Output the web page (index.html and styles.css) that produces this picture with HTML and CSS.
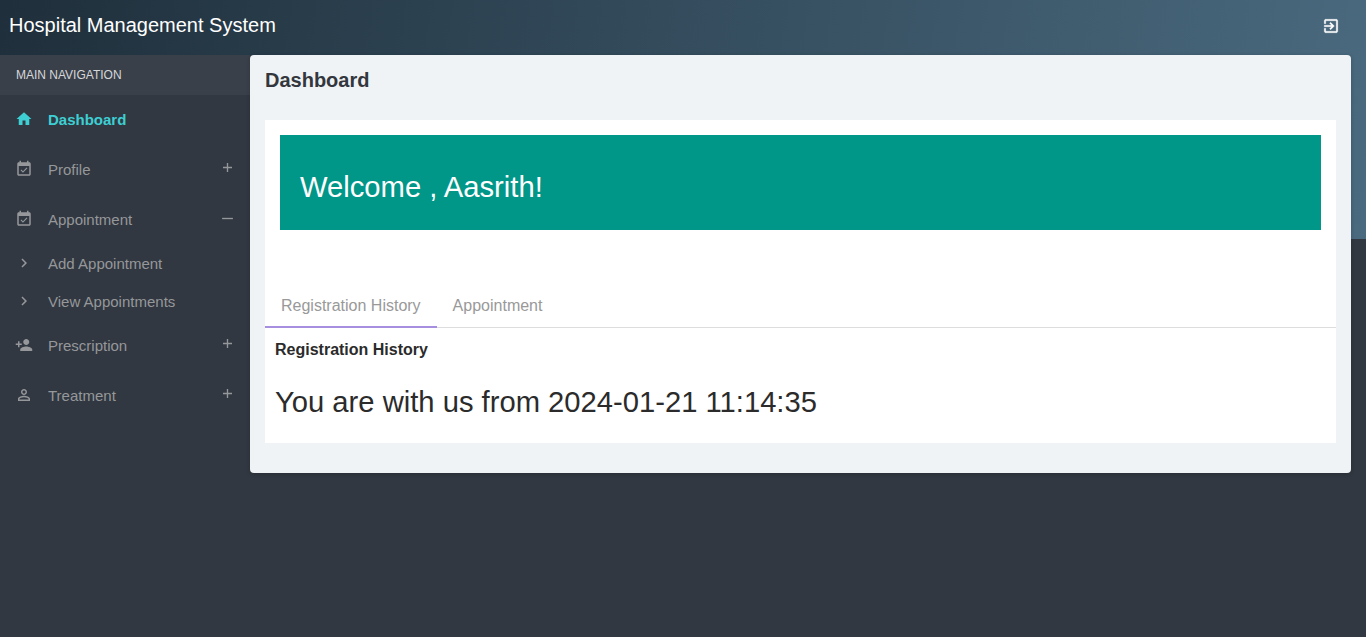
FILE: index.html
```html
<!DOCTYPE html>
<html lang="en">
<head>
    <meta charset="UTF-8">
    <meta name="viewport" content="width=device-width, initial-scale=1.0">
    <title>Hospital Management System</title>
    <link rel="stylesheet" href="styles.css">
</head>
<body>
    <header class="topbar">
        <span class="brand">Hospital Management System</span>
        <a class="logout" href="#" aria-label="Logout">
            <svg viewBox="0 0 24 24"><path d="M10.09 15.59L11.5 17l5-5-5-5-1.41 1.41L12.67 11H3v2h9.67l-2.58 2.59zM19 3H5c-1.11 0-2 .9-2 2v4h2V5h14v14H5v-4H3v4c0 1.1.89 2 2 2h14c1.1 0 2-.9 2-2V5c0-1.11-.89-2-2-2z"/></svg>
        </a>
    </header>
    <div class="layout">
        <nav class="sidebar">
            <div class="nav-title">MAIN NAVIGATION</div>
            <ul class="nav-list">
                <li class="nav-item active">
                    <svg class="nav-icon" viewBox="0 0 24 24"><path d="M10 20v-6h4v6h5v-8h3L12 3 2 12h3v8z"/></svg>
                    <span class="nav-label">Dashboard</span>
                </li>
                <li class="nav-item">
                    <svg class="nav-icon" viewBox="0 0 24 24"><path d="M16.53 11.06L15.47 10l-4.88 4.88-2.12-2.12-1.06 1.06L10.59 17l5.94-5.94zM19 3h-1V1h-2v2H8V1H6v2H5c-1.11 0-1.99.9-1.99 2L3 19c0 1.1.89 2 2 2h14c1.1 0 2-.9 2-2V5c0-1.1-.9-2-2-2zm0 16H5V8h14v11z"/></svg>
                    <span class="nav-label">Profile</span>
                    <svg class="nav-toggle" viewBox="0 0 10 10"><path d="M0 5h10M5 0v10"/></svg>
                </li>
                <li class="nav-item">
                    <svg class="nav-icon" viewBox="0 0 24 24"><path d="M16.53 11.06L15.47 10l-4.88 4.88-2.12-2.12-1.06 1.06L10.59 17l5.94-5.94zM19 3h-1V1h-2v2H8V1H6v2H5c-1.11 0-1.99.9-1.99 2L3 19c0 1.1.89 2 2 2h14c1.1 0 2-.9 2-2V5c0-1.1-.9-2-2-2zm0 16H5V8h14v11z"/></svg>
                    <span class="nav-label">Appointment</span>
                    <svg class="nav-toggle toggle-wide" viewBox="0 0 12 10"><path d="M0 5h12"/></svg>
                </li>
                <li class="nav-item sub-item">
                    <svg class="nav-icon" viewBox="0 0 24 24"><path d="M10 6L8.59 7.41 13.17 12l-4.58 4.59L10 18l6-6z"/></svg>
                    <span class="nav-label">Add Appointment</span>
                </li>
                <li class="nav-item sub-item">
                    <svg class="nav-icon" viewBox="0 0 24 24"><path d="M10 6L8.59 7.41 13.17 12l-4.58 4.59L10 18l6-6z"/></svg>
                    <span class="nav-label">View Appointments</span>
                </li>
                <li class="nav-item">
                    <svg class="nav-icon" viewBox="0 0 24 24"><path d="M15 12c2.21 0 4-1.79 4-4s-1.79-4-4-4-4 1.79-4 4 1.79 4 4 4zm-9-2V7H4v3H1v2h3v3h2v-3h3v-2H6zm9 4c-2.67 0-8 1.34-8 4v2h16v-2c0-2.66-5.33-4-8-4z"/></svg>
                    <span class="nav-label">Prescription</span>
                    <svg class="nav-toggle" viewBox="0 0 10 10"><path d="M0 5h10M5 0v10"/></svg>
                </li>
                <li class="nav-item">
                    <svg class="nav-icon" viewBox="0 0 24 24"><path d="M12 5.9c1.16 0 2.1.94 2.1 2.1s-.94 2.1-2.1 2.1S9.9 9.16 9.9 8s.94-2.1 2.1-2.1m0 9c2.97 0 6.1 1.46 6.1 2.1v1.1H5.9V17c0-.64 3.13-2.1 6.1-2.1M12 4C9.79 4 8 5.79 8 8s1.79 4 4 4 4-1.79 4-4-1.79-4-4-4zm0 9c-2.67 0-8 1.34-8 4v3h16v-3c0-2.66-5.33-4-8-4z"/></svg>
                    <span class="nav-label">Treatment</span>
                    <svg class="nav-toggle" viewBox="0 0 10 10"><path d="M0 5h10M5 0v10"/></svg>
                </li>
            </ul>
        </nav>
        <main class="panel">
            <h1 class="panel-title">Dashboard</h1>
            <section class="card">
                <div class="welcome">Welcome , Aasrith!</div>
                <ul class="tabs">
                    <li class="tab active">Registration History</li>
                    <li class="tab">Appointment</li>
                </ul>
                <div class="tab-body">
                    <h2 class="tab-heading">Registration History</h2>
                    <p class="tab-text">You are with us from 2024-01-21 11:14:35</p>
                </div>
            </section>
        </main>
    </div>
</body>
</html>
```
FILE: styles.css
```css
html, body {
    height: 100%;
}
body {
    margin: 0;
    font-family: "Liberation Sans", Arial, sans-serif;
    color: #2b2b2b;
    background-color: #313841;
    background-image: linear-gradient(100deg, #1f2f3b 0%, #2c4150 30%, #4a6a7f 100%);
    background-size: 100% 239px;
    background-repeat: no-repeat;
}
.topbar {
    display: flex;
    align-items: center;
    justify-content: space-between;
    height: 55px;
    padding: 0 26px 4px 9px;
    box-sizing: border-box;
}
.brand {
    font-size: 20px;
    color: #fff;
}
.logout {
    display: flex;
}
.logout svg {
    width: 18px;
    height: 18px;
    fill: #fff;
    stroke: #fff;
    stroke-width: 0.4;
}
.layout {
    display: flex;
    align-items: flex-start;
    height: calc(100% - 55px);
}
.sidebar {
    width: 250px;
    flex-shrink: 0;
    height: 100%;
    background-color: #313841;
}
.nav-title {
    height: 40px;
    line-height: 40px;
    padding-left: 16px;
    font-size: 12px;
    color: #d5d7da;
    background-color: #3a4049;
}
.nav-list {
    list-style: none;
    margin: 0;
    padding: 0;
}
.nav-item {
    display: flex;
    align-items: center;
    height: 50px;
    padding: 0 18px 2px 15px;
    box-sizing: border-box;
    font-size: 15px;
    color: #96979a;
}
.nav-item.active {
    color: #3dcfd3;
    font-weight: bold;
}
.sub-item {
    height: 38px;
}
.nav-icon {
    width: 18px;
    height: 18px;
    margin-right: 15px;
    fill: currentColor;
    flex-shrink: 0;
}
.nav-label {
    flex: 1;
}
.nav-toggle {
    width: 9px;
    height: 9px;
    margin-top: -3px;
    stroke: currentColor;
    stroke-width: 1.5;
    fill: none;
}
.toggle-wide {
    width: 11px;
    margin-top: -1px;
    margin-right: -1px;
}
.panel {
    flex: 1;
    margin-right: 15px;
    padding: 0 15px 30px;
    background-color: #eff3f6;
    border-radius: 4px;
    box-shadow: 0 1px 4px rgba(0, 0, 0, 0.2);
}
.panel-title {
    height: 65px;
    margin: 0;
    padding-top: 13px;
    box-sizing: border-box;
    font-size: 20px;
    line-height: 24px;
    color: #33373d;
}
.card {
    padding-top: 15px;
    background-color: #fff;
}
.welcome {
    height: 95px;
    margin: 0 15px 55px;
    padding: 0 20px;
    line-height: 104px;
    font-size: 29.2px;
    color: #fff;
    background-color: #009688;
}
.tabs {
    display: flex;
    list-style: none;
    margin: 0;
    padding: 0;
    border-bottom: 1px solid #ddd;
}
.tab {
    height: 43px;
    line-height: 42px;
    margin-bottom: -1px;
    padding: 0 16px;
    font-size: 16px;
    color: #999;
}
.tab.active {
    box-shadow: inset 0 -2px 0 #a78fe0;
}
.tab-body {
    padding: 0 10px;
}
.tab-heading {
    margin: 13px 0 0;
    font-size: 16px;
    line-height: 18px;
    color: #2b2b2b;
}
.tab-text {
    margin: 0;
    padding: 25px 0 23px;
    font-size: 29.2px;
    line-height: 36px;
    color: #2b2b2b;
}
```
